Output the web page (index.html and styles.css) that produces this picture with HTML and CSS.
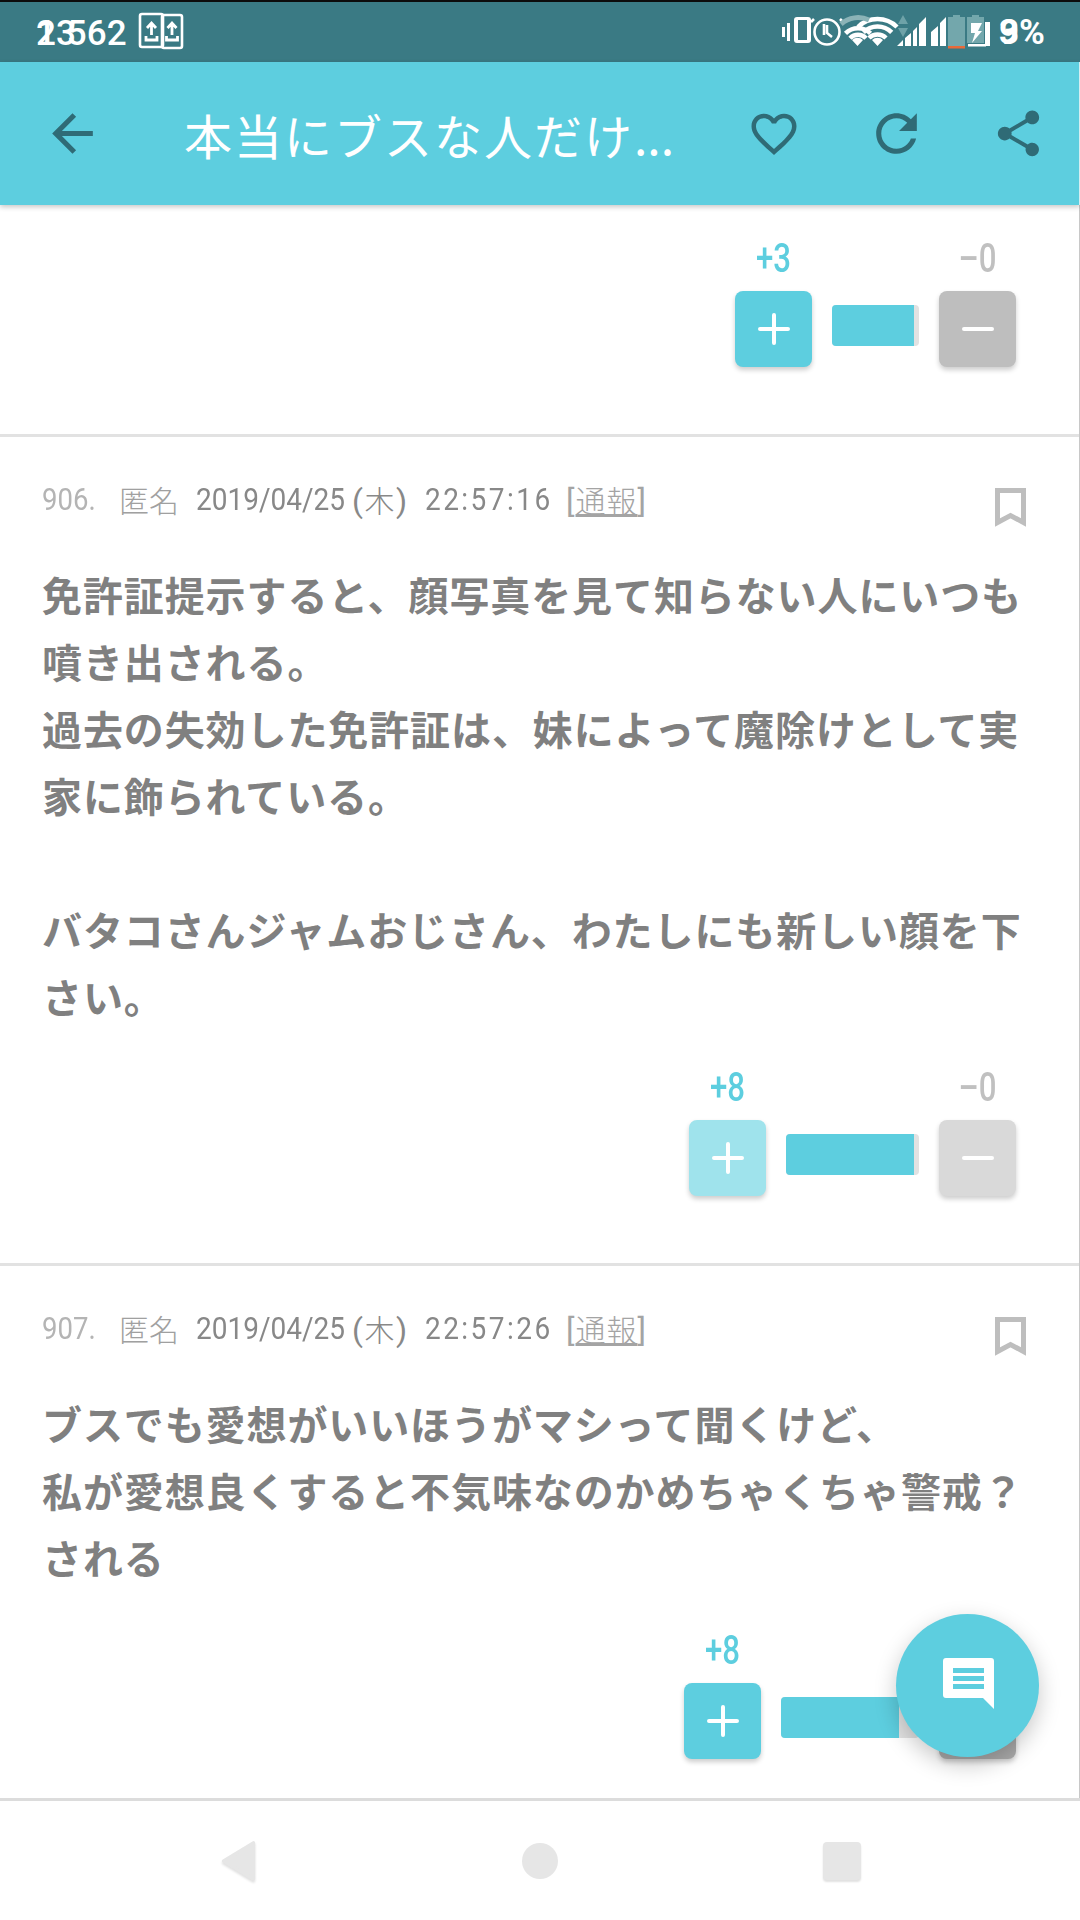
FILE: index.html
```html
<!DOCTYPE html>
<html lang="ja">
<head>
<meta charset="utf-8">
<title>本当にブスな人だけ...</title>
<link rel="stylesheet" href="styles.css">
</head>
<body>
<div class="screen">
  <header class="status">
    <div class="status-left">
      <div class="time"><span class="ghost">1</span><span>2</span><span class="tight">3</span><span>5</span><span>6</span><span>2</span></div>
      <svg class="uploads" viewBox="138 10 48 42" width="48" height="42" fill="none" stroke="#fff">
        <rect x="140" y="14" width="23" height="33" rx="2" stroke-width="2.600"/>
        <rect x="162" y="15" width="20" height="33" rx="2" stroke-width="2.600"/>
        <path d="M151.500 35V24M147 28l4.500-5 4.500 5M146 36v4h11v-4M172 35V24M167.500 28l4.500-5 4.500 5M166.500 36v4h11v-4" stroke-width="2.800"/>
      </svg>
    </div>
    <div class="status-right">
      <svg viewBox="780 0 216 62" width="216" height="62">
        <g fill="#fff">
          <rect x="783" y="27" width="3" height="10"/><rect x="788" y="23" width="3" height="18"/>
          <path d="M798 17h11a3 3 0 0 1 3 3v20a3 3 0 0 1-3 3h-11a3 3 0 0 1-3-3V20a3 3 0 0 1 3-3zm1 3v20h9V20z"/>
          <path d="M858.500 46l-5.500-6a8 8 0 0 1 11 0zM878.500 46l-5.500-6a8 8 0 0 1 11 0z"/>
          <path d="M898 46l6-6v6zM906 38l6-5v13h-6zM920 24l7-7v29h-7zM914 46V31l4-4v19zM932 32l7-6v20h-7zM941 23l6-6v29h-6z"/>
          <rect x="969" y="44" width="18" height="2.500"/>
          <rect x="986" y="22" width="5" height="24"/>
        </g>
        <g fill="none" stroke="#fff" stroke-width="4.500">
          <circle cx="828" cy="32" r="12.500" stroke-width="2.600"/>
          <path d="M825 24v11M828 25v8l5 4" stroke-width="2.600"/>
          <path d="M815 19l-3 3M841 19l3 3" stroke-width="2.600"/>
          <path d="M851 38.200A11 11 0 0 1 867 38.200M846.500 33.300A18 18 0 0 1 871.500 33.300"/>
          <path d="M870 38A12 12 0 0 1 887 38M864.300 32.300A20 20 0 0 1 892.700 32.300M859 27A28 28 0 0 1 898 27"/>
        </g>
        <path d="M842 24A26 26 0 0 1 870 20" fill="none" stroke="#8bb3b7" stroke-width="5"/>
        <path d="M904 15l5 9h-10zM904 37l-5-9h10z" fill="#6ea2a8"/>
        <path d="M954 17v-2h7v2h5v29h-17V17zM973 17v-2h7v2h5v26h-17V17z" fill="#73a7ac"/>
        <rect x="949" y="46" width="17" height="2.500" fill="#e86a3a"/>
        <path d="M972 23h11l-4 8h4l-10 12 3-10h-4z" fill="#fff"/>
      </svg>
      <div class="percent"><span class="ghost">3</span><span>9%</span></div>
    </div>
  </header>

  <nav class="appbar">
    <div class="slot back">
      <svg viewBox="0 0 24 24" width="61" height="61" class="bar-icon"><path d="M20 11H7.830l5.590-5.590L12 4l-8 8 8 8 1.410-1.410L7.830 13H20v-2z"/></svg>
    </div>
    <h1 class="title">本当にブスな人だけ<span class="dots">...</span></h1>
    <div class="slot">
      <svg viewBox="0 0 24 24" width="54" height="54" class="bar-icon"><path d="M16.500 3c-1.740 0-3.410.81-4.500 2.090C10.910 3.810 9.240 3 7.500 3 4.420 3 2 5.420 2 8.500c0 3.780 3.400 6.860 8.550 11.540L12 21.350l1.450-1.320C18.600 15.360 22 12.280 22 8.500 22 5.420 19.580 3 16.500 3zm-4.400 15.550l-.1.100-.1-.1C7.140 14.240 4 11.390 4 8.500 4 6.500 5.500 5 7.500 5c1.540 0 3.040.99 3.570 2.360h1.870C13.460 5.990 14.960 5 16.500 5c2 0 3.500 1.500 3.500 3.500 0 2.890-3.140 5.740-7.900 10.050z"/></svg>
    </div>
    <div class="slot">
      <svg viewBox="0 0 24 24" width="61" height="61" class="bar-icon"><path d="M17.650 6.350C16.200 4.900 14.210 4 12 4c-4.420 0-7.990 3.580-7.990 8s3.570 8 7.990 8c3.730 0 6.840-2.550 7.730-6h-2.080c-.82 2.330-3.040 4-5.650 4-3.310 0-6-2.690-6-6s2.690-6 6-6c1.660 0 3.140.69 4.220 1.780L13 11h7V4l-2.350 2.350z"/></svg>
    </div>
    <div class="slot">
      <svg viewBox="0 0 24 24" width="55" height="55" class="bar-icon"><path d="M18 16.080c-.76 0-1.440.3-1.960.77L8.910 12.700c.05-.23.09-.46.09-.7s-.04-.47-.09-.7l7.050-4.110c.54.5 1.250.81 2.040.81 1.660 0 3-1.340 3-3s-1.340-3-3-3-3 1.340-3 3c0 .24.04.47.09.7L8.040 9.810C7.500 9.310 6.790 9 6 9c-1.660 0-3 1.340-3 3s1.340 3 3 3c.79 0 1.500-.31 2.040-.81l7.120 4.160c-.05.21-.08.43-.08.65 0 1.610 1.310 2.920 2.920 2.920 1.610 0 2.920-1.310 2.920-2.920s-1.310-2.920-2.920-2.920z"/></svg>
    </div>
  </nav>

  <main class="feed">
    <section class="comment first">
      <div class="votes">
        <div class="count up">+3</div><div></div><div class="count down">–0</div>
        <div class="btn up"><svg viewBox="0 0 32 32" width="32" height="32" class="sign"><path d="M16 2v28M2 16h28"/></svg></div>
        <div class="meter" style="width:87px"><div class="meter-fill" style="width:82px"></div></div>
        <div class="btn down"><svg viewBox="0 0 32 32" width="32" height="32" class="sign"><path d="M2 16h28"/></svg></div>
      </div>
    </section>

    <section class="comment">
      <div class="meta">
        <div class="meta-text">
          <span class="num">906.</span><span class="name">匿名</span><span class="date">2019/04/25</span><span class="day">(<span class="kanji">木</span>)</span><span class="clock">22:57:16</span><span class="report">[<u class="kanji">通報</u>]</span>
        </div>
        <svg class="bookmark" viewBox="0 0 31 39" width="31" height="39"><path d="M2.500 2.500h26v32l-13-7-13 7z"/></svg>
      </div>
      <p class="body">免許証提示すると、顔写真を見て知らない人にいつも噴き出される。<br>過去の失効した免許証は、妹によって魔除けとして実家に飾られている。<br><br>バタコさんジャムおじさん、わたしにも新しい顔を下さい。</p>
      <div class="votes">
        <div class="count up">+8</div><div></div><div class="count down">–0</div>
        <div class="btn up faded"><svg viewBox="0 0 32 32" width="32" height="32" class="sign"><path d="M16 2v28M2 16h28"/></svg></div>
        <div class="meter" style="width:133px"><div class="meter-fill" style="width:128px"></div></div>
        <div class="btn down faded"><svg viewBox="0 0 32 32" width="32" height="32" class="sign"><path d="M2 16h28"/></svg></div>
      </div>
    </section>

    <section class="comment last">
      <div class="meta">
        <div class="meta-text">
          <span class="num">907.</span><span class="name">匿名</span><span class="date">2019/04/25</span><span class="day">(<span class="kanji">木</span>)</span><span class="clock">22:57:26</span><span class="report">[<u class="kanji">通報</u>]</span>
        </div>
        <svg class="bookmark" viewBox="0 0 31 39" width="31" height="39"><path d="M2.500 2.500h26v32l-13-7-13 7z"/></svg>
      </div>
      <p class="body">ブスでも愛想がいいほうがマシって聞くけど、<br>私が愛想良くすると不気味なのかめちゃくちゃ警戒？<br>される</p>
      <div class="votes">
        <div class="count up">+8</div><div></div><div class="count down">–0</div>
        <div class="btn up"><svg viewBox="0 0 32 32" width="32" height="32" class="sign"><path d="M16 2v28M2 16h28"/></svg></div>
        <div class="meter" style="width:138px"><div class="meter-fill" style="width:118px"></div></div>
        <div class="btn down dark"><svg viewBox="0 0 32 32" width="32" height="32" class="sign"><path d="M2 16h28"/></svg></div>
      </div>
    </section>
  </main>

  <footer class="navbar">
    <svg class="nav-back" viewBox="0 0 40 48" width="36" height="44"><path d="M36 4v40L3 24z"/></svg>
    <div class="nav-home"></div>
    <div class="nav-recent"></div>
  </footer>

  <button class="fab" type="button" aria-label="comment">
    <svg viewBox="0 0 51 51" width="51" height="51"><path d="M3 0h45a3 3 0 0 1 3 3v48L40 40H3a3 3 0 0 1-3-3V3a3 3 0 0 1 3-3z" fill="#fff"/><path d="M10 10h31v5H10zM10 18h31v5H10zM10 26h31v5H10z" fill="#5dcedf"/></svg>
  </button>
</div>
</body>
</html>
```
FILE: styles.css
```css
* { box-sizing: border-box; }
html, body { margin: 0; padding: 0; background: #fff; }
.screen {
  position: relative;
  width: 1080px;
  height: 1920px;
  display: flex;
  flex-direction: column;
  overflow: hidden;
  font-family: "Noto Sans CJK JP", "Noto Sans", sans-serif;
}

/* status bar */
.status {
  height: 62px;
  flex: none;
  background: #3a7a84;
  border-top: 2px solid #0c0c0c;
  display: flex;
  justify-content: space-between;
  color: #fff;
  font-family: Roboto, "Liberation Sans", sans-serif;
  font-size: 35px;
  font-weight: 500;
  line-height: 60px;
}
.status-left { display: flex; padding-left: 36px; }
.status-right { display: flex; padding-right: 35px; margin-top: -2px; }
.time { display: flex; width: 102px; line-height: 62px; margin-top: 1px; }
.ghost { display: inline-block; width: 0; }
.tight { margin-right: -9px; }
.uploads { margin: 8px 0 0 0; }
.percent { display: flex; margin-left: 4px; line-height: 66px; font-weight: 700; }

/* app bar */
.appbar {
  height: 143px;
  flex: none;
  background: #5dcedf;
  display: flex;
  align-items: center;
  border-right: 1px solid #d4eef2;
  box-shadow: 0 2px 5px rgba(0, 0, 0, .22);
  position: relative;
  z-index: 2;
}
.slot {
  width: 122px;
  height: 100%;
  flex: none;
  display: flex;
  align-items: center;
  justify-content: center;
}
.back { margin: 0 51px 0 11px; }
.bar-icon { fill: #2f6b76; display: block; }
.title {
  flex: 1;
  margin: 0;
  color: #fff;
  font-size: 48px;
  font-weight: 400;
  letter-spacing: 2px;
  line-height: 60px;
  white-space: nowrap;
}
.dots { letter-spacing: 0; }

/* feed */
.feed {
  flex: 1;
  min-height: 0;
  overflow: hidden;
  background: #fff;
  border-right: 1px solid #c8c8c8;
}
.comment {
  padding: 51px 0 67px 42px;
  border-bottom: 3px solid #e2e2e2;
}
.comment.first { padding-top: 35px; }
.comment.last { border-bottom: 0; }

.meta {
  display: flex;
  justify-content: space-between;
  align-items: flex-start;
  padding-right: 53px;
  height: 39px;
}
.meta-text {
  display: flex;
  font-family: Roboto, "Noto Sans CJK JP", sans-serif;
  font-size: 32px;
  line-height: 23px;
  color: #888;
  font-weight: 400;
}
.kanji { font-family: "Noto Sans CJK JP", sans-serif; font-size: 30px; font-weight: 300; }
.num { color: #b4b4b4; width: 77px; transform: scaleX(.86); transform-origin: left center; }
.name { color: #a0a0a0; width: 77px; font-family: "Noto Sans CJK JP", sans-serif; font-size: 30px; font-weight: 300; }
.date { width: 156px; transform: scaleX(.875); transform-origin: left center; }
.day { width: 73px; letter-spacing: 1.5px; }
.clock { letter-spacing: 2.8px; width: 141px; transform: scaleX(.875); transform-origin: left center; }
.report { color: #a4a4a4; letter-spacing: 1px; }
.bookmark { fill: none; stroke: #bebebe; stroke-width: 5; }

.body {
  margin: 34px 0 0;
  padding-right: 40px;
  color: #808080;
  font-size: 40px;
  font-weight: 700;
  letter-spacing: .9px;
  line-height: 67px;
}
.body + .votes { margin-top: 39px; }
.last .body + .votes { margin-top: 41px; }

/* votes */
.votes {
  display: grid;
  grid-template-columns: 77px auto 77px;
  grid-template-rows: 35px 76px;
  column-gap: 20px;
  row-gap: 16px;
  justify-content: end;
  align-items: center;
  padding-right: 63px;
}
.count {
  text-align: center;
  font-family: Roboto, sans-serif;
  font-size: 40px;
  line-height: 35px;
  font-weight: 500;
  padding-top: 1px;
  transform: scaleX(.78);
}
.count.up { color: #5dcedf; }
.count.down { color: #c0c0c0; }
.btn {
  height: 76px;
  border-radius: 8px;
  display: flex;
  align-items: center;
  justify-content: center;
  box-shadow: 0 3px 5px rgba(0, 0, 0, .2);
}
.btn.up { background: #5dcedf; }
.btn.down { background: #bebebe; }
.btn.up.faded { background: #9fe3ec; }
.btn.down.faded { background: #d9d9d9; }
.btn.down.dark { background: #a9a9a9; }
.sign { fill: none; stroke: #fff; stroke-width: 4; stroke-linecap: round; display: block; }
.meter {
  height: 41px;
  align-self: start;
  margin-top: 14px;
  background: #e2e2e2;
  border-radius: 4px;
  overflow: hidden;
}
.meter-fill { height: 100%; background: #5dcedf; }

/* nav bar */
.navbar {
  height: 122px;
  flex: none;
  background: #fff;
  border-top: 3px solid #dcdcdc;
  display: grid;
  grid-template-columns: repeat(3, 301.500px);
  justify-content: center;
  align-items: center;
  justify-items: center;
  position: relative;
  z-index: 1;
}
.nav-back { fill: #e6e6e6; stroke: #e6e6e6; stroke-width: 4; stroke-linejoin: round; filter: drop-shadow(0 2px 1px rgba(0, 0, 0, .12)); }
.nav-home { width: 36px; height: 36px; border-radius: 50%; background: #e6e6e6; }
.nav-recent { width: 38px; height: 38px; border-radius: 4px; background: #e6e6e6; box-shadow: 0 2px 2px rgba(0, 0, 0, .12); }

/* floating button */
.fab {
  position: absolute;
  left: 896px;
  top: 1614px;
  width: 143px;
  height: 143px;
  border: 0;
  padding: 0 0 0 2px;
  border-radius: 50%;
  background: #5dcedf;
  box-shadow: 0 8px 22px rgba(0, 0, 0, .22);
  display: flex;
  align-items: center;
  justify-content: center;
  z-index: 3;
}
.fab svg { display: block; margin-bottom: 4px; }
```
